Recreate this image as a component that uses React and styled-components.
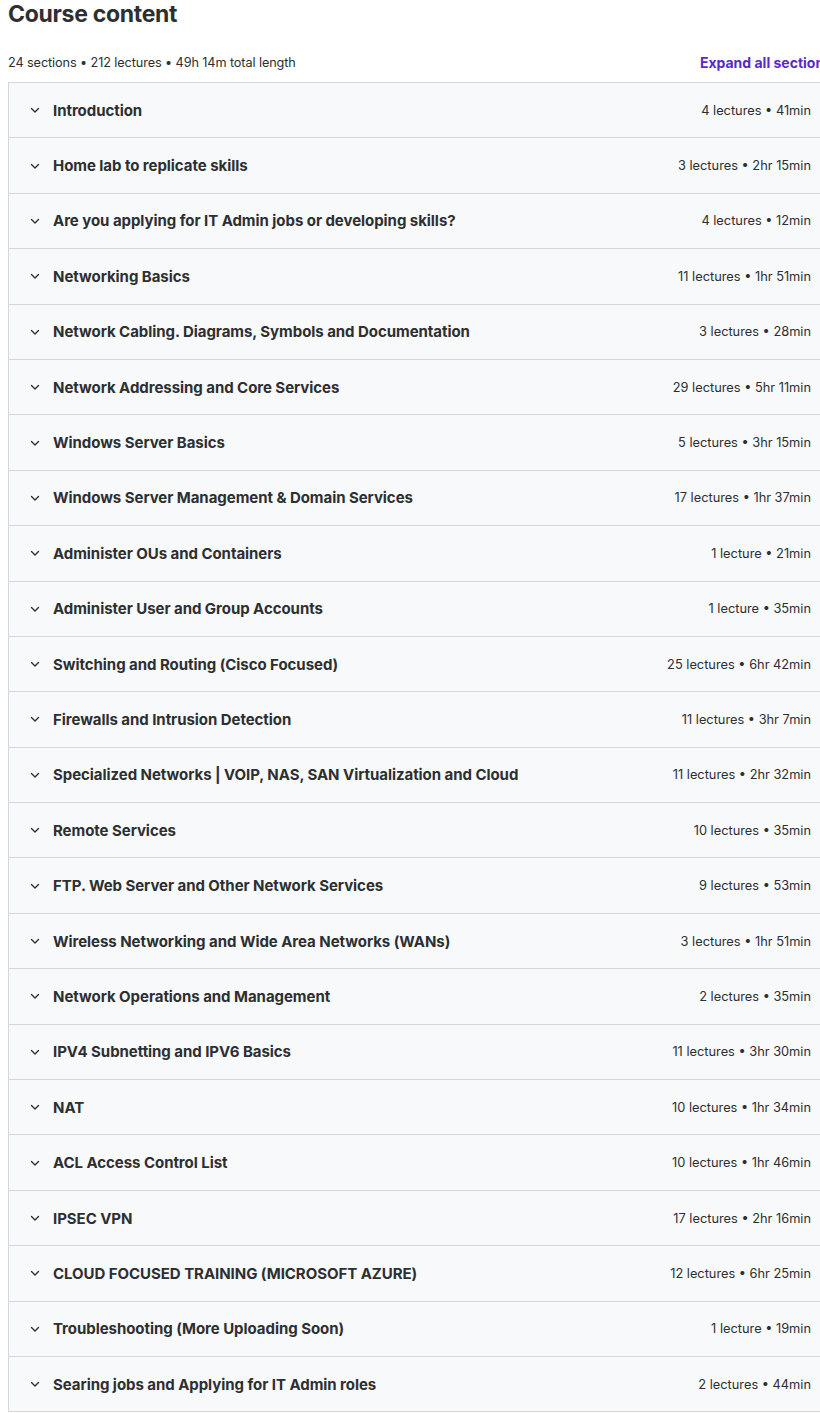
import React from "react";
import styled, { createGlobalStyle } from "styled-components";

const GlobalStyle = createGlobalStyle`
  html, body {
    margin: 0;
    padding: 0;
    background: #ffffff;
    overflow: hidden;
  }
  body {
    font-family: Inter, "Liberation Sans", sans-serif;
    color: #2d2f31;
  }
`;

const sections = [
  ["Introduction", "4 lectures • 41min"],
  ["Home lab to replicate skills", "3 lectures • 2hr 15min"],
  ["Are you applying for IT Admin jobs or developing skills?", "4 lectures • 12min"],
  ["Networking Basics", "11 lectures • 1hr 51min"],
  ["Network Cabling. Diagrams, Symbols and Documentation", "3 lectures • 28min"],
  ["Network Addressing and Core Services", "29 lectures • 5hr 11min"],
  ["Windows Server Basics", "5 lectures • 3hr 15min"],
  ["Windows Server Management & Domain Services", "17 lectures • 1hr 37min"],
  ["Administer OUs and Containers", "1 lecture • 21min"],
  ["Administer User and Group Accounts", "1 lecture • 35min"],
  ["Switching and Routing (Cisco Focused)", "25 lectures • 6hr 42min"],
  ["Firewalls and Intrusion Detection", "11 lectures • 3hr 7min"],
  ["Specialized Networks | VOIP, NAS, SAN Virtualization and Cloud", "11 lectures • 2hr 32min"],
  ["Remote Services", "10 lectures • 35min"],
  ["FTP. Web Server and Other Network Services", "9 lectures • 53min"],
  ["Wireless Networking and Wide Area Networks (WANs)", "3 lectures • 1hr 51min"],
  ["Network Operations and Management", "2 lectures • 35min"],
  ["IPV4 Subnetting and IPV6 Basics", "11 lectures • 3hr 30min"],
  ["NAT", "10 lectures • 1hr 34min"],
  ["ACL Access Control List", "10 lectures • 1hr 46min"],
  ["IPSEC VPN", "17 lectures • 2hr 16min"],
  ["CLOUD FOCUSED TRAINING (MICROSOFT AZURE)", "12 lectures • 6hr 25min"],
  ["Troubleshooting (More Uploading Soon)", "1 lecture • 19min"],
  ["Searing jobs and Applying for IT Admin roles", "2 lectures • 44min"],
];

const Viewport = styled.div`
  width: 820px;
  overflow: hidden;
`;

const Content = styled.section`
  width: 828px;
  padding-left: 8px;
`;

const Title = styled.h2`
  margin: 0;
  padding-top: 2px;
  font-size: 23px;
  line-height: 24px;
  font-weight: 700;
  letter-spacing: -0.3px;
`;

const Summary = styled.div`
  display: flex;
  justify-content: space-between;
  align-items: center;
  height: 28px;
  margin: 22px 0 6px;
  font-size: 12.7px;
  letter-spacing: -0.1px;
`;

const ExpandLink = styled.button`
  border: none;
  background: none;
  padding: 0 4px 0 0;
  font-family: inherit;
  font-size: 14px;
  font-weight: 700;
  color: #5a2ac8;
  cursor: pointer;
  white-space: nowrap;
`;

const List = styled.div`
  border: 1px solid #d1d7dc;
  border-bottom: none;
`;

const Row = styled.div`
  display: flex;
  align-items: center;
  justify-content: space-between;
  height: 54.4px;
  padding: 0 24px 0 20px;
  background: #f7f9fa;
  border-bottom: 1px solid #d1d7dc;
`;

const RowTitle = styled.div`
  display: flex;
  align-items: center;
  gap: 12px;
  font-size: 15px;
  font-weight: 700;
  letter-spacing: -0.05px;
  color: #2d2f31;
`;

const Meta = styled.span`
  font-size: 12.8px;
  color: #2d2f31;
  white-space: nowrap;
`;

const Chevron = () => (
  <svg width="12" height="12" viewBox="0 0 12 12" fill="none">
    <path d="M2.5 4.5 L6 8 L9.5 4.5" stroke="#2d2f31" strokeWidth="1.4" strokeLinecap="round" strokeLinejoin="round" />
  </svg>
);

export default function App() {
  return (
    <Viewport>
      <GlobalStyle />
      <Content>
        <Title>Course content</Title>
        <Summary>
          <span>24 sections • 212 lectures • 49h 14m total length</span>
          <ExpandLink>Expand all sections</ExpandLink>
        </Summary>
        <List>
          {sections.map(([name, meta]) => (
            <Row key={name}>
              <RowTitle>
                <Chevron />
                {name}
              </RowTitle>
              <Meta>{meta}</Meta>
            </Row>
          ))}
        </List>
      </Content>
    </Viewport>
  );
}
